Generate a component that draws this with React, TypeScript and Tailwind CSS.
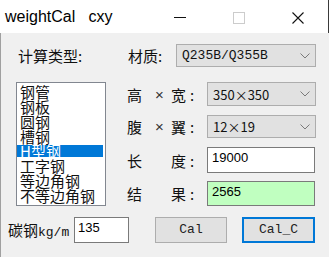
import React from "react";

const CJK = { fontFamily: '"Noto Sans CJK SC", "Noto Sans", sans-serif' };
const MONO = { fontFamily: '"Liberation Mono", "DejaVu Sans Mono", monospace' };
const SANS = { fontFamily: '"Liberation Sans", Arial, sans-serif' };

function Chevron() {
  return (
    <svg width="10" height="6" viewBox="0 0 10 6" className="shrink-0">
      <polyline points="0.5,0.5 5,5 9.5,0.5" fill="none" stroke="#7a7a7a" strokeWidth="1" />
    </svg>
  );
}

function Combo({ text, w, h, mono }: { text: string; w: string; h: string; mono?: boolean }) {
  return (
    <div
      className={`${w} ${h} flex items-center justify-between border border-[#adadad] bg-[#e1e1e1] pl-[5px] pr-[5px] text-[13px] text-[#111]`}
      style={mono ? MONO : CJK}
    >
      <span className="leading-none">{text}</span>
      <Chevron />
    </div>
  );
}

function Label({ a, b, x }: { a: string; b: string; x?: boolean }) {
  return (
    <div className="flex w-[80px] items-center text-[15px] leading-none text-[#111]" style={CJK}>
      <span className="w-[28px]">{a}</span>
      <span className="w-[16px] text-[15px] leading-none text-[#333]" style={SANS}>
        {x ? "×" : ""}
      </span>
      <span className="w-[19px]">{b}</span>
      <span className="w-[17px]">:</span>
    </div>
  );
}

const items = ["钢管", "钢板", "圆钢", "槽钢", "H型钢", "工字钢", "等边角钢", "不等边角钢"];

export default function App() {
  return (
    <div className="flex h-[257px] w-[329px] flex-col overflow-hidden bg-[#f0f0f0]">
      {/* title bar */}
      <div className="flex h-[33px] shrink-0 items-start border-r border-[#3a3a3a] bg-white">
        <div className="whitespace-pre pl-[5px] pt-[7px] text-[16px] leading-[20px] text-black" style={SANS}>
          weightCal   cxy
        </div>
        <div className="ml-auto flex h-[33px] pr-[1px]">
          <div className="flex w-[59px] justify-center pt-[17px]">
            <div className="h-px w-[12px] bg-[#111]" />
          </div>
          <div className="flex w-[59px] justify-center pt-[12px]">
            <div className="h-[12px] w-[12px] border border-[#cccccc]" />
          </div>
          <div className="flex w-[59px] justify-center pt-[12px]">
            <svg width="12" height="12" viewBox="0 0 12 12">
              <path d="M0.5 0.5 L11.5 11.5 M11.5 0.5 L0.5 11.5" stroke="#111" strokeWidth="1.1" />
            </svg>
          </div>
        </div>
      </div>

      {/* body */}
      <div className="flex flex-1 flex-col border-l border-[#a0a0a0]">
        {/* row 1 */}
        <div className="mt-[11px] flex h-[23px] items-center">
          <div className="ml-[17px] w-[110px] text-[15px] leading-none text-[#111]" style={CJK}>
            计算类型:
          </div>
          <div className="w-[48px] text-[15px] leading-none text-[#111]" style={CJK}>
            材质:
          </div>
          <Combo text="Q235B/Q355B" w="w-[140px]" h="h-[23px]" mono />
        </div>

        {/* middle */}
        <div className="mt-[15px] flex">
          <div className="ml-[15px] h-[124px] w-[90px] overflow-hidden border border-[#828790] bg-white pt-[1px]">
            {items.map((it, i) =>
              i === 4 ? (
                <div
                  key={it}
                  className="my-[1px] mr-[2px] h-[12px] whitespace-nowrap bg-[#0078d7] pl-[3px] text-[15px] leading-[12px] text-white"
                  style={CJK}
                >
                  {it}
                </div>
              ) : (
                <div
                  key={it}
                  className="h-[15px] whitespace-nowrap pl-[3px] text-[15px] leading-[15px] text-[#111]"
                  style={CJK}
                >
                  {it}
                </div>
              )
            )}
          </div>

          <div className="ml-[21px] flex flex-col">
            <div className="flex h-[24px] items-center">
              <Label a="高" b="宽" x />
              <Combo text="350×350" w="w-[109px]" h="h-[24px]" />
            </div>
            <div className="mt-[9px] flex h-[23px] items-center">
              <Label a="腹" b="翼" x />
              <Combo text="12×19" w="w-[109px]" h="h-[23px]" />
            </div>
            <div className="mt-[9px] flex h-[26px] items-center">
              <Label a="长" b="度" />
              <div
                className="h-[26px] w-[108px] border border-[#7a7a7a] bg-white pl-[4px] pt-[2px] text-[13px] leading-[16px] text-black"
                style={SANS}
              >
                19000
              </div>
            </div>
            <div className="mt-[8px] flex h-[25px] items-center">
              <Label a="结" b="果" />
              <div
                className="h-[25px] w-[108px] border border-[#7a7a7a] bg-[#c0ffc0] pl-[4px] pt-[2px] text-[13px] leading-[16px] text-black"
                style={SANS}
              >
                2565
              </div>
            </div>
          </div>
        </div>

        {/* bottom row */}
        <div className="mt-[11px] flex h-[26px] items-center">
          <div className="ml-[7px] flex w-[66px] items-baseline text-[#111]">
            <span className="text-[15px] leading-none" style={CJK}>
              碳钢
            </span>
            <span className="text-[13px] leading-none" style={MONO}>
              kg/m
            </span>
          </div>
          <div
            className="h-[26px] w-[55px] border border-[#7a7a7a] bg-white pl-[3px] pt-[2px] text-[13px] leading-[16px] text-black"
            style={SANS}
          >
            135
          </div>
          <div
            className="ml-[26px] flex h-[26px] w-[72px] items-center justify-center border border-[#adadad] bg-[#e1e1e1] text-[13px] text-[#222]"
            style={MONO}
          >
            Cal
          </div>
          <div
            className="ml-[15px] flex h-[26px] w-[73px] items-center justify-center border-2 border-[#0078d7] bg-[#e1e1e1] text-[13px] text-[#222]"
            style={MONO}
          >
            Cal_C
          </div>
        </div>
      </div>
    </div>
  );
}
